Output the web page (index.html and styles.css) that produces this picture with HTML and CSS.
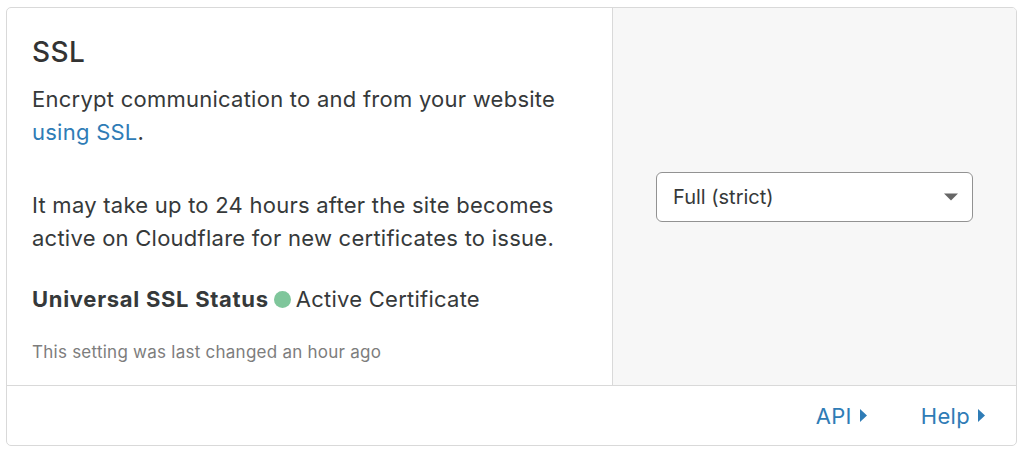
FILE: index.html
```html
<!DOCTYPE html>
<html lang="en">
<head>
<meta charset="utf-8">
<title>SSL</title>
<link rel="stylesheet" href="styles.css">
</head>
<body>
<div class="card">
  <div class="card-main">
    <div class="card-body">
      <h2 class="title">SSL</h2>
      <p class="desc">Encrypt communication to and from your website <a class="link" href="#">using SSL</a>.</p>
      <p class="desc">It may take up to 24 hours after the site becomes active on Cloudflare for new certificates to issue.</p>
      <p class="status"><strong>Universal SSL Status</strong> <span class="dot"></span> Active Certificate</p>
      <p class="meta">This setting was last changed an hour ago</p>
    </div>
    <div class="card-control">
      <div class="select">
        <span class="select-value">Full (strict)</span>
        <svg class="caret" width="14" height="8" viewBox="0 0 14 8"><path d="M0 0.5H14L7 7.5Z" fill="#666"/></svg>
      </div>
    </div>
  </div>
  <div class="card-footer">
    <a class="foot-link" href="#">API <svg class="tri" width="7" height="13" viewBox="0 0 7 13"><path d="M0 0L7 6.5L0 13Z" fill="#2f7cb6"/></svg></a>
    <a class="foot-link" href="#">Help <svg class="tri" width="7" height="13" viewBox="0 0 7 13"><path d="M0 0L7 6.5L0 13Z" fill="#2f7cb6"/></svg></a>
  </div>
</div>
</body>
</html>
```

FILE: styles.css
```css
* { box-sizing: border-box; }
html, body { margin: 0; padding: 0; background: #fff; }
body {
  font-family: Inter, "Noto Sans", "Liberation Sans", sans-serif;
  color: #36393a;
  padding: 7px 7px 0 6px;
}
.card {
  width: 1011px;
  height: 439px;
  border: 1px solid #d9d9d9;
  border-radius: 5px;
  display: flex;
  flex-direction: column;
  overflow: hidden;
}
.card-main {
  display: flex;
  flex: 1;
  border-bottom: 1px solid #d9d9d9;
}
.card-body {
  width: 606px;
  padding: 27px 25px 0 25px;
  border-right: 1px solid #d9d9d9;
}
.title {
  margin: 0 0 14px;
  font-size: 28px;
  font-weight: 500;
  letter-spacing: 0.4px;
  line-height: 34px;
  color: #333;
}
.desc {
  margin: 0 0 40px;
  font-size: 22px;
  letter-spacing: 0.25px;
  line-height: 33px;
}
.link { color: #2f7cb6; text-decoration: none; }
.status {
  margin: -12px 0 0;
  font-size: 22px;
  letter-spacing: 0.25px;
  line-height: 32px;
  display: flex;
  align-items: center;
  gap: 5px;
}
.status strong { font-weight: 700; letter-spacing: 0.7px; }
.dot {
  width: 17px; height: 17px; border-radius: 50%;
  background: #7fc69b;
  display: inline-block;
}
.meta {
  margin: 27px 0 0;
  font-size: 17px;
  letter-spacing: 0.25px;
  line-height: 20px;
  color: #7d7d7d;
}
.card-control {
  flex: 1;
  background: #f7f7f7;
  display: flex;
  align-items: center;
  justify-content: center;
}
.select {
  width: 317px;
  height: 50px;
  background: #fff;
  border: 1px solid #929292;
  border-radius: 6px;
  display: flex;
  align-items: center;
  justify-content: space-between;
  padding: 0 14px 0 16px;
  font-size: 20px;
  color: #36393a;
}
.card-footer {
  height: 59px;
  display: flex;
  justify-content: flex-end;
  align-items: center;
  gap: 54px;
  padding-right: 31px;
}
.foot-link {
  color: #2f7cb6;
  text-decoration: none;
  font-size: 22px;
  letter-spacing: 0.3px;
  display: flex;
  align-items: center;
  gap: 8px;
}
```
